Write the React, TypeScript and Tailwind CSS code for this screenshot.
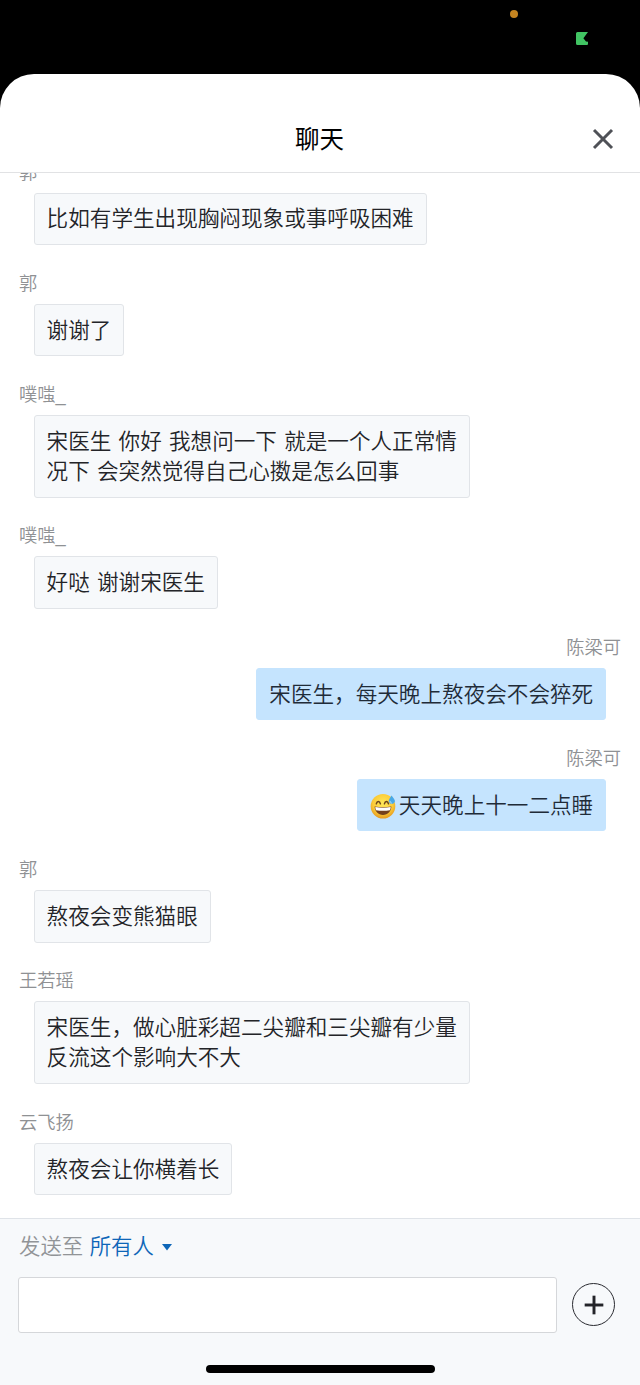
import { Plus, X } from 'lucide-react';
import clsx from 'clsx';

type Message = {
  id: number;
  name: string;
  lines: string[];
  mine?: boolean;
  emoji?: boolean;
};

const messages: Message[] = [
  { id: 1, name: '郭', lines: ['比如有学生出现胸闷现象或事呼吸困难'] },
  { id: 2, name: '郭', lines: ['谢谢了'] },
  {
    id: 3,
    name: '噗嗤_',
    lines: ['宋医生 你好 我想问一下 就是一个人正常情', '况下 会突然觉得自己心擞是怎么回事'],
  },
  { id: 4, name: '噗嗤_', lines: ['好哒 谢谢宋医生'] },
  { id: 5, name: '陈梁可', lines: ['宋医生，每天晚上熬夜会不会猝死'], mine: true },
  { id: 6, name: '陈梁可', lines: ['天天晚上十一二点睡'], mine: true, emoji: true },
  { id: 7, name: '郭', lines: ['熬夜会变熊猫眼'] },
  { id: 8, name: '王若瑶', lines: ['宋医生，做心脏彩超二尖瓣和三尖瓣有少量', '反流这个影响大不大'] },
  { id: 9, name: '云飞扬', lines: ['熬夜会让你横着长'] },
];

function SweatSmile() {
  return (
    <svg viewBox="0 0 26 26" role="img" aria-label="😅" className="mr-[3px] h-[26px] w-[26px] shrink-0">
      <defs>
        <radialGradient id="face" cx="50%" cy="38%" r="62%">
          <stop offset="0" stopColor="#ffe95a" />
          <stop offset="0.65" stopColor="#fbcb38" />
          <stop offset="1" stopColor="#e69a20" />
        </radialGradient>
      </defs>
      <circle cx="13" cy="13.2" r="12.3" fill="url(#face)" />
      <path d="M6.3 10.8c.7-3 3.4-3 4.1 0M14.4 10.8c.7-3 3.4-3 4.1 0" fill="none" stroke="#6b431a" strokeWidth="1.5" strokeLinecap="round" />
      <path d="M4.6 13.6c5.4.9 11.4.9 16.8 0-.2 4.9-3.6 8.3-8.4 8.3s-8.2-3.4-8.400-8.300z" fill="#74401d" />
      <path d="M5.3 14.1c5 .8 10.4.8 15.4 0 0 1.2-.3 2.2-.8 3.1-4.400.8-9.400.8-13.800 0-.5-.9-.8-1.900-.8-3.100z" fill="#fff" />
      <path d="M21.6 2.4c-1.300 2-2.900 4-2.900 5.900a3.200 3.200 0 0 0 6.300 0c0-1.900-2.100-3.900-3.400-5.900z" fill="#4aa9e6" />
      <path d="M20.1 8.3c.1 1 .7 1.6 1.5 1.8" fill="none" stroke="#b9e5fb" strokeWidth="0.9" strokeLinecap="round" />
    </svg>
  );
}

function MessageItem({ message }: { message: Message }) {
  const { name, lines, mine, emoji } = message;

  return (
    <li className={clsx('flex flex-col px-[19px]', mine ? 'items-end' : 'items-start')}>
      <span className="text-[18.3px] leading-6 text-[#8f9194]">{name}</span>
      <div
        className={clsx(
          'mt-2 flex items-center rounded-[3px] border pt-[10.9px] pb-[9.4px] text-[21.6px] leading-[30.1px] whitespace-nowrap [word-spacing:1.2px]',
          mine
            ? 'mr-[15px] border-[#c5e4fe] bg-[#c5e4fe] px-[11.8px] text-[#1f2b38]'
            : 'ml-[15px] border-[#e1e4e8] bg-[#f7f9fb] pr-3 pl-[11.6px] text-[#232428]'
        )}
      >
        {emoji && <SweatSmile />}
        <div>
          {lines.map((line) => (
            <p key={line}>{line}</p>
          ))}
        </div>
      </div>
    </li>
  );
}

function StatusBar() {
  return (
    <div className="relative h-[74px] shrink-0">
      <span className="absolute top-[10px] left-[510px] h-2 w-2 rounded-full bg-[#c48420]" />
      <svg viewBox="0 0 12 13" className="absolute top-8 left-[576px] h-[13px] w-3">
        <path d="M1.5 0H12L7.4 6.3 10 9.400l2 .4v2.200q0 1-1 1H1.500Q0 13 0 11.500v-10Q0 0 1.500 0z" fill="#41c463" />
      </svg>
    </div>
  );
}

export default function App() {
  return (
    <div className="flex h-[1385px] w-[640px] flex-col overflow-hidden bg-black font-['Liberation_Sans','Noto_Sans_CJK_SC',sans-serif] font-[350]">
      <StatusBar />

      <div className="flex min-h-0 flex-1 flex-col overflow-hidden rounded-t-[34px] bg-white">
        {/* Header */}
        <header className="grid h-[99px] shrink-0 grid-cols-[1fr_auto_1fr] items-center border-b border-[#e1e2e4] px-[19px] pt-8">
          <h1 className="col-start-2 -ml-px pt-0.5 text-[24.5px] leading-8 font-normal text-black">聊天</h1>
          <button aria-label="关闭" className="justify-self-end">
            <X className="h-9 w-9 text-[#4f5157]" strokeWidth={2} strokeLinecap="butt" />
          </button>
        </header>

        {/* Messages */}
        <ul className="flex min-h-0 flex-1 flex-col justify-end gap-[26.9px] overflow-hidden pb-[22.8px]">
          {messages.map((message) => (
            <MessageItem key={message.id} message={message} />
          ))}
        </ul>

        {/* Composer */}
        <footer className="flex h-[167px] shrink-0 flex-col border-t border-[#dfe3e8] bg-[#f7f9fb] px-[18px]">
          <div className="mt-3 flex h-8 items-center pl-px text-[21.4px] leading-8">
            <span className="text-[#919497]">发送至</span>
            <button className="ml-[6.500px] flex items-center text-[#0e66b8]">
              所有人
              <svg viewBox="0 0 10 7" className="ml-2 h-[7px] w-[10px]">
                <path d="M0 0h10L5 6.500z" fill="currentColor" />
              </svg>
            </button>
          </div>
          <div className="mt-[13.5px] flex items-center gap-[15px]">
            <input className="h-14 w-[539px] rounded-[3px] border border-[#d5d7da] bg-white px-3 text-[21.6px] outline-none" />
            <button
              aria-label="更多"
              className="flex h-[43px] w-[43px] items-center justify-center rounded-full border-[1.5px] border-[#292a30] text-[#232429]"
            >
              <Plus className="h-8 w-8" strokeWidth={2.2} strokeLinecap="butt" />
            </button>
          </div>
          <div className="mt-8 h-2 w-[229px] self-center rounded-full bg-black" />
        </footer>
      </div>
    </div>
  );
}
